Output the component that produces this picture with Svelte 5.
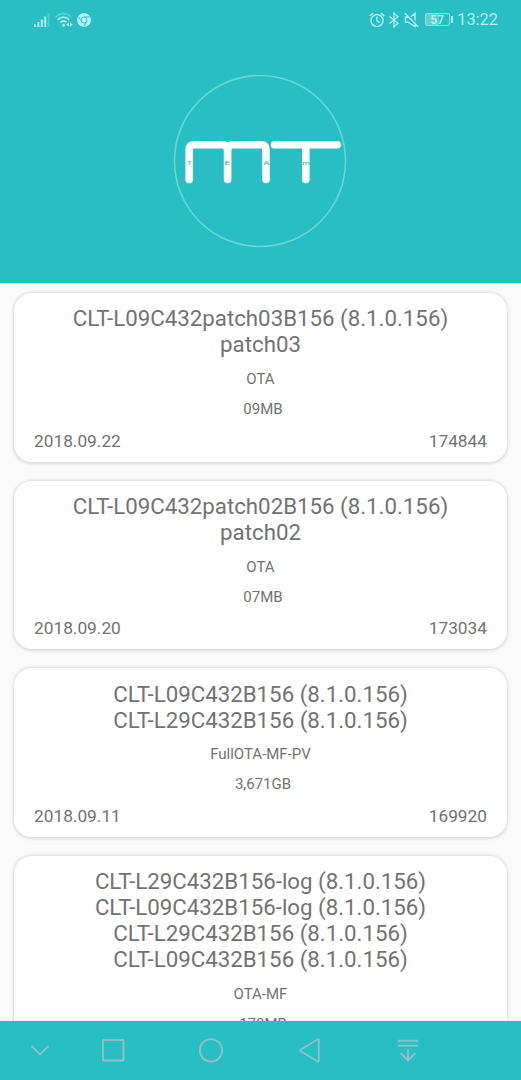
<script>
  const updates = [
    { titles: ['CLT-L09C432patch03B156 (8.1.0.156)', 'patch03'], type: 'OTA', size: '09MB', date: '2018.09.22', id: '174844' },
    { titles: ['CLT-L09C432patch02B156 (8.1.0.156)', 'patch02'], type: 'OTA', size: '07MB', date: '2018.09.20', id: '173034' },
    { titles: ['CLT-L09C432B156 (8.1.0.156)', 'CLT-L29C432B156 (8.1.0.156)'], type: 'FullOTA-MF-PV', size: '3,671GB', date: '2018.09.11', id: '169920' },
    {
      titles: ['CLT-L29C432B156-log (8.1.0.156)', 'CLT-L09C432B156-log (8.1.0.156)', 'CLT-L29C432B156 (8.1.0.156)', 'CLT-L09C432B156 (8.1.0.156)'],
      type: 'OTA-MF', size: '178MB'
    }
  ];
</script>

<div class="screen">
  <header>
    <div class="status">
      <div class="left">
        <svg width="16" height="16" viewBox="0 0 16 16" fill="#b5eff0">
          <rect x="0" y="12" width="2" height="3" /><rect x="3.4" y="10" width="2" height="5" />
          <rect x="6.8" y="7.5" width="2" height="7.5" /><rect x="10.2" y="4.5" width="2" height="10.5" />
          <rect x="13.6" y="1" width="1.8" height="14" opacity=".3" />
        </svg>
        <svg width="18" height="16" viewBox="0 0 18 16" fill="none" stroke="#b5eff0" stroke-width="1.8">
          <path d="M.5 5.2Q8.5-2.2 16.5 5.2" opacity=".35" />
          <path d="M2.7 7.8Q8.5 2.5 14.3 7.8M5.3 10.6Q8.5 7.6 11.5 10.1" />
          <circle cx="8.5" cy="13.2" r="1.5" fill="#b5eff0" stroke="none" />
          <path d="M14 10.5 11 12.6 14 14.7zM15 10.5 18 12.6 15 14.7z" fill="#b5eff0" stroke="none" />
        </svg>
        <svg width="14" height="14" viewBox="0 0 14 14">
          <circle cx="7" cy="7" r="7" fill="#b5eff0" />
          <circle cx="7" cy="7" r="3" fill="none" stroke="#28bec4" stroke-width=".9" />
          <path d="M7 4h6M4.4 8.5 1.5 3.8M9.6 8.5 6.8 13.4" stroke="#28bec4" stroke-width=".8" fill="none" />
        </svg>
      </div>
      <div class="right">
        <svg width="16" height="16" viewBox="0 0 16 16" fill="none" stroke="#b5eff0" stroke-width="1.5">
          <circle cx="8" cy="8.5" r="6" /><path d="M8 4.8v4l2.6 1.8M.8 4 4 1.1M12 1.1 15.2 4" />
        </svg>
        <svg class="bt" width="10" height="16" viewBox="0 0 10 16" fill="none" stroke="#b5eff0" stroke-width="1.4">
          <path d="M.5 4.5 9 11.3 5 14.8V1.2l4 3.5L.5 11.5" />
        </svg>
        <svg class="mute" width="15" height="16" viewBox="0 0 15 16" fill="none" stroke="#b5eff0" stroke-width="1.5">
          <path d="M5 5.2H1.5v5H4l7 4.3v-3M6.8 4.8 11 1.5v7M.8 1.2 14 14.8" />
        </svg>
        <div class="battery"><span>57</span></div>
        <div class="clock">13:22</div>
      </div>
    </div>
    <svg class="logo" width="174" height="174" viewBox="0 0 174 174">
      <circle cx="87" cy="87" r="85.5" fill="none" stroke="#69d5d8" stroke-width="1.6" />
      <g fill="none" stroke="#fff" stroke-width="7.6" stroke-linecap="round" stroke-linejoin="round">
        <path d="M16.2 105.5V75.5Q16.2 70.7 21 70.7H49Q54.6 70.7 54.6 76.3V105.5V76.3Q54.6 70.7 60.2 70.7H88Q93 70.7 93 75.7V105.5" />
        <path d="M101.5 70.7H164.2M132.8 70.7V105.5" />
      </g>
      <g fill="#62aeb1" font-size="4.8" font-weight="500" text-anchor="middle" font-family="Inter, sans-serif">
        <text x="16.3" y="90.8" textLength="5" lengthAdjust="spacingAndGlyphs">T</text>
        <text x="54.6" y="90.8" textLength="6" lengthAdjust="spacingAndGlyphs">E</text>
        <text x="93.4" y="90.8" textLength="6.5" lengthAdjust="spacingAndGlyphs">A</text>
        <text x="133" y="90.8" textLength="8" lengthAdjust="spacingAndGlyphs">m</text>
      </g>
    </svg>
  </header>
  <main>
    {#each updates as u}
      <article>
        <h2>{#each u.titles as title}<span>{title}</span>{/each}</h2>
        <p class="type">{u.type}</p>
        <p class="size">{u.size}</p>
        {#if u.date}<div class="meta"><span>{u.date}</span><span>{u.id}</span></div>{/if}
      </article>
    {/each}
  </main>
  <nav>
    <svg width="24" height="28" viewBox="0 0 24 28"><path d="M3.5 10 12 18.5 20.5 10" /></svg>
    <div class="keys">
      <svg width="24" height="28" viewBox="0 0 24 28"><rect x="2" y="4" width="20.5" height="20.5" rx=".5" /></svg>
      <svg width="24" height="28" viewBox="0 0 24 28"><circle cx="12" cy="14.3" r="11.2" /></svg>
      <svg width="24" height="28" viewBox="0 0 24 28"><path d="M20.8 3.8v21.2q0 1-.9.5L2.5 15.1q-.9-.7 0-1.3L19.9 3.3q.9-.5.9.5z" /></svg>
      <svg width="24" height="28" viewBox="0 0 24 28"><path d="M2 4.8h20M2 9.8h20M12 13.5v10.5M4.7 17 12 24.3 19.3 17" /></svg>
    </div>
  </nav>
</div>

<style>
  :global(body) { margin: 0; overflow: hidden; }
  .screen {
    width: 521px; height: 1080px; display: flex; flex-direction: column; overflow: hidden;
    background: #fafafa; color: #727272; font-family: Roboto, sans-serif;
  }
  header {
    flex: none; height: 283px; background: #28bec4; display: flex; flex-direction: column; align-items: center;
    box-shadow: 0 1px 1px #dceeee;
  }
  .status {
    width: 100%; height: 39px; padding: 0 23px 0 34px; box-sizing: border-box;
    display: flex; justify-content: space-between; align-items: center; color: #b5eff0;
  }
  .left, .right { display: flex; align-items: center; }
  .left { gap: 4.5px; }
  .bt { margin-left: 4px; }
  .mute { margin-left: 4.5px; }
  .battery {
    position: relative; width: 23px; height: 11px; margin-left: 6px; border: 1px solid #8de0e2; border-radius: 2px;
    background: linear-gradient(90deg, #62cfd3 58%, transparent 58%);
    display: flex; align-items: center; justify-content: center; font-size: 12px; font-weight: 500; line-height: 12px;
    color: #c8f5f5;
  }
  .battery::after { content: ''; position: absolute; right: -4px; top: 2px; width: 2px; height: 7px; background: #b5eff0; }
  .clock { margin-left: 7.5px; font-size: 16.4px; line-height: 20px; }
  .logo { flex: none; margin: 35px .8px 0 0; }
  main {
    flex: 1; min-height: 0; overflow: hidden; padding: 10px 14px 0; display: flex; flex-direction: column; gap: 19px;
  }
  article {
    flex: none; padding: 12.4px 20px 10px; border-radius: 18px; background: #fff; box-shadow: 0 .5px 3px 1px #dadada;
    text-align: center;
  }
  h2 { margin: 0; font-size: 22.27px; font-weight: 400; line-height: 26px; }
  h2 span { display: block; white-space: nowrap; }
  p { margin: 0; font-size: 15px; line-height: 18px; }
  .type { margin-top: 12.6px; }
  .size { margin-top: 12px; padding-left: 5px; }
  .meta { margin-top: 11.6px; display: flex; justify-content: space-between; font-size: 17.3px; line-height: 22px; }
  nav {
    flex: none; height: 58px; padding: 0 101px 1px 28px; background: #28bec4; display: flex; align-items: center;
  }
  nav svg { flex: none; fill: none; stroke: #91bfc2; stroke-width: 1.9; }
  .keys { flex: 1; margin-left: 49px; display: flex; justify-content: space-between; }
</style>
